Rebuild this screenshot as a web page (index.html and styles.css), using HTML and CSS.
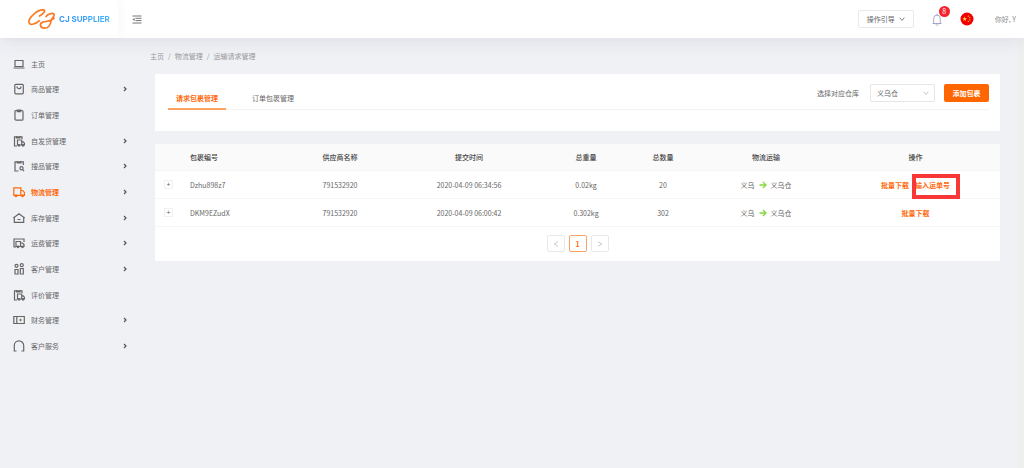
FILE: index.html
```html
<!DOCTYPE html>
<html lang="zh-CN">
<head>
<meta charset="utf-8">
<title>CJ Supplier</title>
<link rel="stylesheet" href="styles.css">
</head>
<body>
<svg class="sprite" aria-hidden="true">
  <symbol id="i-laptop" viewBox="0 0 12 12"><path d="M2 2.500h8v6H2zM.5 10h11"/></symbol>
  <symbol id="i-bag" viewBox="0 0 12 12"><rect x="1.800" y="1.300" width="8.500" height="9.500" rx="1"/><path d="M4 3.500c0 3 4 3 4 0"/></symbol>
  <symbol id="i-clip" viewBox="0 0 12 12"><rect x="2" y="1.500" width="8" height="9.700" rx="1"/><path d="M4.300 1v1.700h3.400V1z"/></symbol>
  <symbol id="i-clip-truck" viewBox="0 0 12 12"><path d="M9 4V1.800H1.500V11H4M3.500 1v1.800H7V1M4.500 5h4.200v5H4.500zM8.700 6.800h1.500l1.300 1.500V10H8.700"/><circle cx="6" cy="10.300" r=".8"/><circle cx="10" cy="10.300" r=".8"/></symbol>
  <symbol id="i-clip-search" viewBox="0 0 12 12"><path d="M10.300 5V1.800H2V11h3.500M4.300 1v1.800h3.500V1M9.800 9.800l1.200 1.400"/><circle cx="8.500" cy="8.300" r="1.600"/></symbol>
  <symbol id="i-truck" viewBox="0 0 12 12"><path d="M.8 1.800h7v7.500h-7zM7.800 4.500h2L11.400 6.500v2.800H7.800"/><circle cx="3" cy="9.900" r=".8"/><circle cx="9.500" cy="9.900" r=".8"/></symbol>
  <symbol id="i-house" viewBox="0 0 12 12"><path d="M1.300 10.300V5.200L6 1.800l4.700 3.400v5.100zM.3 6L1.500 5M11.700 6l-1.200-1M4.500 7.500h3"/></symbol>
  <symbol id="i-fee" viewBox="0 0 12 12"><path d="M11 5V2H1v8h2M3 4.500h4.500V9.500H3zM7.500 6h2l1.500 1.500v2H7.500"/><circle cx="5" cy="9.800" r=".8"/><circle cx="9.500" cy="9.800" r=".8"/></symbol>
  <symbol id="i-people" viewBox="0 0 12 12"><circle cx="3.500" cy="2.800" r="1.500"/><circle cx="8.800" cy="2.200" r="1.500"/><path d="M2 6.500h3V11H2zM7.300 5.500h3V11h-3z"/></symbol>
  <symbol id="i-money" viewBox="0 0 12 12"><path d="M.8 2.500h10.500v7H.8zM3.800 2.500v7M7.500 4.800v2.400M6.500 6h2"/></symbol>
  <symbol id="i-headset" viewBox="0 0 12 12"><path d="M3.500 11H1.300V5.600a4.700 4.700 0 0 1 9.400 0V11H8.500"/></symbol>
  <symbol id="i-right" viewBox="0 0 6 6"><path d="M2 1l2 2-2 2"/></symbol>
  <symbol id="i-left" viewBox="0 0 6 6"><path d="M5 .7L1.300 3 5 5.300"/></symbol>
  <symbol id="i-next" viewBox="0 0 6 6"><path d="M1 .7l3.700 2.300L1 5.300"/></symbol>
  <symbol id="i-down" viewBox="0 0 6 6"><path d="M.7 1.600L3 4.500l2.300-2.900"/></symbol>
  <symbol id="i-arrow" viewBox="0 0 8 8"><path d="M.5 4h6.500M4 1l3 3-3 3"/></symbol>
</svg>

<header class="header">
  <a class="brand" href="#">
    <svg class="brand-mark" viewBox="0 0 28 20" aria-hidden="true">
      <path d="M11.500 7C15 5 18.300 1.500 15.500.9 10 .2 1 8 .9 12.800c0 4.500 6.500 2.400 10.300-1"/>
      <path d="M18 7.500C20 4.500 26.200 3.200 26.200 6c0 2-2.800 3.200-3.200 6-.6 4-3 7.200-6.500 7.100-4.700-.2-5.500-4.800-1.500-6 4-1 7.500-.6 11-3.800"/>
    </svg>
    <span class="brand-name">CJ SUPPLIER</span>
  </a>
  <button class="fold" type="button" aria-label="收起菜单">
    <svg viewBox="0 0 10 9" aria-hidden="true"><path d="M.5 1h9M3.500 3.300h6M3.500 5.600h6M.5 8h9"/><path class="solid" d="M2.600 2.900v3.200L.4 4.500z"/></svg>
  </button>
  <div class="tools">
    <button class="guide" type="button">操作引导<svg class="tiny" aria-hidden="true"><use href="#i-down"/></svg></button>
    <button class="bell" type="button" aria-label="消息">
      <svg viewBox="0 0 10 13" aria-hidden="true"><path d="M.5 10.500h9M1.700 10.500V5.400a3.300 3.300 0 0 1 6.600 0v5.100M5 2V.7M3.800 11.500c.4 1 2 1 2.400 0"/></svg>
      <span class="badge">8</span>
    </button>
    <svg class="flag" viewBox="0 0 14 14" role="img" aria-label="中国"><circle cx="7" cy="7" r="6.500" fill="#f00000"/><path fill="#ffda2c" d="M4.700 4.500l.6 1.700h1.800L5.700 7.300l.5 1.700-1.500-1-1.500 1 .5-1.700-1.400-1.100h1.800z"/><g fill="#ffda2c"><circle cx="8.300" cy="4.200" r=".6"/><circle cx="9.800" cy="5.700" r=".6"/><circle cx="9.800" cy="7.900" r=".6"/><circle cx="8.300" cy="9.400" r=".6"/></g></svg>
    <span class="hello">你好, Y</span>
  </div>
</header>

<div class="body">
  <nav class="menu">
    <a href="#"><svg aria-hidden="true"><use href="#i-laptop"/></svg><span>主页</span></a>
    <a href="#"><svg aria-hidden="true"><use href="#i-bag"/></svg><span>商品管理</span><svg class="more" aria-hidden="true"><use href="#i-right"/></svg></a>
    <a href="#"><svg aria-hidden="true"><use href="#i-clip"/></svg><span>订单管理</span></a>
    <a href="#"><svg aria-hidden="true"><use href="#i-clip-truck"/></svg><span>自发货管理</span><svg class="more" aria-hidden="true"><use href="#i-right"/></svg></a>
    <a href="#"><svg aria-hidden="true"><use href="#i-clip-search"/></svg><span>搜品管理</span><svg class="more" aria-hidden="true"><use href="#i-right"/></svg></a>
    <a href="#" class="active"><svg aria-hidden="true"><use href="#i-truck"/></svg><span>物流管理</span><svg class="more" aria-hidden="true"><use href="#i-right"/></svg></a>
    <a href="#"><svg aria-hidden="true"><use href="#i-house"/></svg><span>库存管理</span><svg class="more" aria-hidden="true"><use href="#i-right"/></svg></a>
    <a href="#"><svg aria-hidden="true"><use href="#i-fee"/></svg><span>运费管理</span><svg class="more" aria-hidden="true"><use href="#i-right"/></svg></a>
    <a href="#"><svg aria-hidden="true"><use href="#i-people"/></svg><span>客户管理</span><svg class="more" aria-hidden="true"><use href="#i-right"/></svg></a>
    <a href="#"><svg aria-hidden="true"><use href="#i-clip-truck"/></svg><span>评价管理</span></a>
    <a href="#"><svg aria-hidden="true"><use href="#i-money"/></svg><span>财务管理</span><svg class="more" aria-hidden="true"><use href="#i-right"/></svg></a>
    <a href="#"><svg aria-hidden="true"><use href="#i-headset"/></svg><span>客户服务</span><svg class="more" aria-hidden="true"><use href="#i-right"/></svg></a>
  </nav>

  <main class="main">
    <nav class="crumbs" aria-label="路径"><a href="#">主页</a><span>/</span><a href="#">物流管理</a><span>/</span><a href="#">运输请求管理</a></nav>

    <section class="panel filter">
      <div class="bar">
        <div class="tabs" role="tablist">
          <button class="tab current" type="button" role="tab" aria-selected="true">请求包裹管理</button>
          <button class="tab" type="button" role="tab" aria-selected="false">订单包裹管理</button>
        </div>
        <div class="choose">
          <label for="store">选择对应仓库</label>
          <span class="select"><select id="store"><option>义乌仓</option></select><svg class="tiny" aria-hidden="true"><use href="#i-down"/></svg></span>
          <button class="add" type="button">添加包裹</button>
        </div>
      </div>
    </section>

    <section class="panel">
      <table class="list">
        <colgroup><col class="c-open"><col class="c-code"><col class="c-name"><col class="c-time"><col class="c-weight"><col class="c-count"><col class="c-route"><col class="c-action"></colgroup>
        <thead>
          <tr><th></th><th class="start">包裹编号</th><th>供应商名称</th><th>提交时间</th><th>总重量</th><th>总数量</th><th>物流运输</th><th>操作</th></tr>
        </thead>
        <tbody>
          <tr>
            <td><button class="open" type="button" aria-label="展开">+</button></td>
            <td class="start">Dzhu898z7</td><td>791532920</td><td>2020-04-09 06:34:56</td><td>0.02kg</td><td>20</td>
            <td><span class="route">义乌<svg aria-hidden="true"><use href="#i-arrow"/></svg>义乌仓</span></td>
            <td><span class="actions"><a href="#">批量下载</a><a href="#" class="marked">输入运单号</a></span></td>
          </tr>
          <tr>
            <td><button class="open" type="button" aria-label="展开">+</button></td>
            <td class="start">DKM9EZudX</td><td>791532920</td><td>2020-04-09 06:00:42</td><td>0.302kg</td><td>302</td>
            <td><span class="route">义乌<svg aria-hidden="true"><use href="#i-arrow"/></svg>义乌仓</span></td>
            <td><span class="actions"><a href="#">批量下载</a></span></td>
          </tr>
        </tbody>
      </table>
      <div class="pages">
        <button type="button" aria-label="上一页"><svg class="tiny" aria-hidden="true"><use href="#i-left"/></svg></button>
        <button type="button" class="current">1</button>
        <button type="button" aria-label="下一页"><svg class="tiny" aria-hidden="true"><use href="#i-next"/></svg></button>
      </div>
    </section>
  </main>
</div>
</body>
</html>
```

FILE: styles.css
```css
* { box-sizing: border-box; }

body {
  margin: 0;
  min-height: 100vh;
  display: flex;
  flex-direction: column;
  background: #f0f1f5;
  color: #666;
  font: 7px/12px "Noto Sans CJK SC", sans-serif;
}

button, select {
  margin: 0;
  padding: 0;
  border: 0;
  background: none;
  color: inherit;
  font: inherit;
}

a { color: inherit; text-decoration: none; }
svg { fill: none; stroke: currentColor; flex: none; }
.sprite { position: absolute; width: 0; height: 0; }
.tiny { width: 6px; height: 6px; stroke-width: 0.8; }

.header {
  position: relative;
  display: flex;
  align-items: center;
  height: 38px;
  background: #fff;
  box-shadow: 0 2px 20px rgba(50, 60, 80, 0.1);
}

.brand {
  display: flex;
  align-items: center;
  gap: 3px;
  width: 118px;
  height: 38px;
  padding-left: 28px;
  box-shadow: 3px 0 8px rgba(50, 60, 80, 0.03);
}
.brand-mark { width: 28px; height: 20px; stroke: #fb7a26; stroke-width: 1.7; stroke-linecap: round; }
.brand-name {
  background: linear-gradient(90deg, #2f8cf2, #45b4fa);
  background-clip: text;
  color: transparent;
  font: 700 8px/12px Inter, sans-serif;
  white-space: nowrap;
}

.fold { width: 10px; height: 9px; margin-left: 14px; color: #777; }
.fold svg { display: block; width: 10px; height: 9px; stroke-width: 1; }
.solid { fill: currentColor; stroke: none; }

.tools { display: flex; align-items: center; margin-left: auto; padding-right: 8px; }
.guide {
  display: flex;
  align-items: center;
  justify-content: center;
  gap: 4px;
  width: 56px;
  height: 18px;
  border: 1px solid #e9e9e9;
  border-radius: 2px;
}
.bell { position: relative; margin-left: 18px; color: #a5a5c8; }
.bell svg { display: block; width: 10px; height: 13px; }
.badge {
  position: absolute;
  top: -7px;
  left: 7px;
  width: 11px;
  height: 11px;
  border-radius: 50%;
  background: #f5222d;
  color: #fff;
  line-height: 11px;
}
.flag { width: 14px; height: 14px; margin-left: 18px; stroke: none; }
.hello { margin-left: 21px; color: #888; }

.body {
  display: flex;
  flex: 1;
  border-right: 6px solid #efefef;
}

.menu {
  display: grid;
  grid-auto-rows: 1fr;
  width: 137px;
  height: 308px;
  margin-top: 13px;
  padding: 0 9px 0 13px;
}
.menu a { display: flex; align-items: center; gap: 6px; }
.menu svg { width: 12px; height: 12px; stroke-width: 1.2; }
.menu .more { width: 6px; height: 6px; margin-left: auto; color: #555; }
.menu .active { color: #ff6a0d; font-weight: 700; }

.main { flex: 1; min-width: 0; padding: 12px 18px 0; }
.crumbs { display: flex; gap: 4px; margin-left: -5px; color: #999; }

.panel { background: #fff; }
.filter { margin: 12px 0 13px; padding: 10px 11px 21px 13px; }
.bar { display: flex; justify-content: space-between; border-bottom: 1px solid #f3f3f3; }
.tabs { display: flex; gap: 18px; }
.tab { height: 26px; margin-bottom: -1px; padding: 3px 8px 0; border-bottom: 2px solid transparent; }
.tab.current { border-color: #fba265; color: #ff6a0d; font-weight: 700; }
.choose { display: flex; align-items: flex-start; gap: 9px; }
.choose label { margin: 3px 2px 0 0; }
.select { position: relative; }
.select select {
  display: block;
  appearance: none;
  width: 65px;
  height: 18px;
  padding: 0 16px 0 6px;
  border: 1px solid #e6e6e6;
  border-radius: 2px;
}
.select svg { position: absolute; top: 6px; right: 6px; color: #bbb; pointer-events: none; }
.add { width: 45px; height: 18px; border-radius: 2px; background: #ff6600; color: #fff; font-weight: 700; }

.list { width: 100%; table-layout: fixed; border-collapse: separate; border-spacing: 0; }
.c-open { width: 27px; }
.c-code { width: 107px; }
.c-name { width: 102px; }
.c-time { width: 156px; }
.c-weight { width: 78px; }
.c-count { width: 76px; }
.c-route { width: 130px; }
.c-action { width: 169px; }
.list th, .list td {
  height: 28px;
  padding: 0;
  border-bottom: 1px solid #f5f5f5;
  text-align: center;
  white-space: nowrap;
}
.list th { height: 27px; background: #fafafa; color: #444; font-weight: 500; }
.list .start { padding-left: 8px; text-align: left; }
.open { display: block; width: 9px; height: 9px; margin: 0 auto; border: 1px solid #f1f1f1; line-height: 7px; }
.route { display: inline-flex; align-items: center; gap: 4px; }
.route svg { width: 8px; height: 8px; color: #85d840; stroke-width: 1.3; }
.actions { display: inline-flex; gap: 6px; color: #ff6a0d; font-weight: 700; }
.marked { position: relative; }
.marked::after {
  content: "";
  position: absolute;
  inset: -5px -10px -8px -3px;
  border: 4px solid #f93737;
}

.pages { display: flex; justify-content: center; gap: 4px; padding: 8px 0 9px; }
.pages button {
  display: flex;
  align-items: center;
  justify-content: center;
  width: 18px;
  height: 17px;
  border: 1px solid #e8e8e8;
  border-radius: 2px;
  color: #bbb;
}
.pages .current { border-color: #fba265; color: #ff6a0d; font-weight: 700; }
```
